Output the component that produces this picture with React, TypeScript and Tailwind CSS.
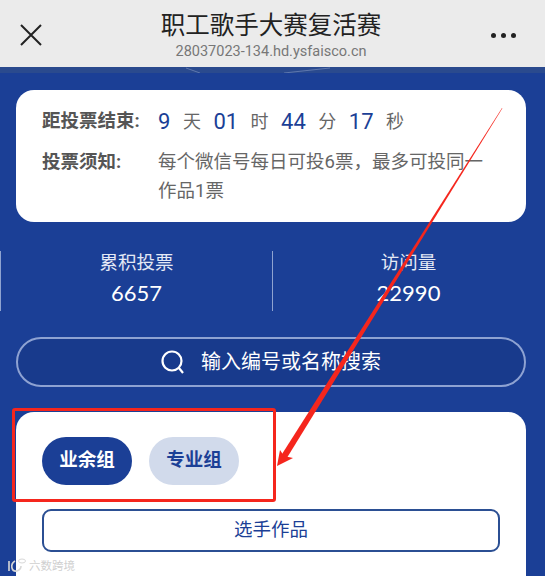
const FONT = "font-['Roboto','Noto_Sans_CJK_SC',sans-serif]";

function Countdown({ value, unit }: { value: string; unit: string }) {
  return (
    <>
      <span className="text-[22px] leading-[30px] text-[#1b3f96]">{value}</span>
      <span className="text-[18px] leading-[30px] text-[#666] mx-[12.5px]">{unit}</span>
    </>
  );
}

function Stat({ label, value }: { label: string; value: string }) {
  return (
    <div className="w-[271px] flex flex-col items-center text-white">
      <div className="text-[18.5px] leading-[24px] text-[#e4e9f5]">{label}</div>
      <div className="text-[22px] leading-[30px] mt-[3px] font-['Lato','Noto_Sans_CJK_SC',sans-serif]">{value}</div>
    </div>
  );
}

export default function App() {
  return (
    <div className={`relative w-[545px] h-[576px] overflow-hidden bg-[#1b3f96] ${FONT}`}>
      {/* title bar */}
      <div className="h-[67px] bg-[#ebebeb] flex items-center">
        <div className="w-[70px] pl-[19px] pt-[2px]">
          <svg width="24" height="24" viewBox="0 0 24 24" className="block">
            <path d="M2 2 L22 22 M22 2 L2 22" stroke="#222" strokeWidth="2" fill="none" />
          </svg>
        </div>
        <div className="flex-1 flex flex-col items-center pt-[3px]">
          <div className="text-[24.5px] leading-[34px] text-[#222]">职工歌手大赛复活赛</div>
          <div className="text-[14.5px] leading-[18px] text-[#777]">28037023-134.hd.ysfaisco.cn</div>
        </div>
        <div className="w-[73px] pr-[29px] pt-[4px] flex justify-end gap-[5px]">
          <span className="w-[5px] h-[5px] rounded-full bg-[#222]" />
          <span className="w-[5px] h-[5px] rounded-full bg-[#222]" />
          <span className="w-[5px] h-[5px] rounded-full bg-[#222]" />
        </div>
      </div>
      {/* bottom edge of the hero picture */}
      <svg className="block" width="545" height="6" viewBox="0 0 545 6">
        <rect width="545" height="6" fill="#2a4a8e" />
        <path d="M186 1 L200 6 M284 6 L330 1" stroke="#5f78ad" strokeWidth="1" fill="none" />
      </svg>

      <div className="pl-[16px] pr-[19px] pt-[17px]">
        {/* countdown + notice */}
        <div className="bg-white rounded-[18px] h-[132px] pl-[26px] pt-[17px]">
          <div className="flex items-center h-[30px]">
            <span className="w-[116px] text-[18.5px] font-bold text-[#555]">距投票结束:</span>
            <Countdown value="9" unit="天" />
            <Countdown value="01" unit="时" />
            <Countdown value="44" unit="分" />
            <Countdown value="17" unit="秒" />
          </div>
          <div className="flex mt-[11px]">
            <span className="w-[116px] shrink-0 text-[18.5px] leading-[29px] font-bold text-[#555]">投票须知:</span>
            <p className="w-[330px] text-[18.5px] leading-[29px] text-[#666]">每个微信号每日可投6票，最多可投同一作品1票</p>
          </div>
        </div>
      </div>

      {/* stats */}
      <div className="flex mt-[29px] h-[60px]">
        <div className="w-[1px] bg-[#8fa3d0]" />
        <Stat label="累积投票" value="6657" />
        <div className="w-[1px] bg-[#8fa3d0]" />
        <Stat label="访问量" value="22990" />
      </div>

      {/* search */}
      <div className="pl-[16px] pr-[19px] mt-[26px]">
        <div className="h-[50px] rounded-full border-2 border-[#8ea2d2] bg-[#183a8c] flex items-center justify-center gap-[16px] text-white">
          <svg width="24" height="24" viewBox="0 0 24 24" fill="none" stroke="white" strokeWidth="2.2">
            <circle cx="11" cy="11" r="9.5" />
            <path d="M18 18 L22 23" />
          </svg>
          <span className="text-[20px]">输入编号或名称搜索</span>
        </div>
      </div>

      {/* groups card */}
      <div className="pl-[16px] pr-[19px] mt-[25px]">
        <div className="bg-white rounded-t-[18px] h-[170px] pl-[26px] pt-[25px]">
          <div className="flex gap-[17px]">
            <button className="w-[90px] h-[48px] rounded-full bg-[#1b3f96] text-white text-[18.5px] font-bold">业余组</button>
            <button className="w-[90px] h-[48px] rounded-full bg-[#d1daeb] text-[#1b3f96] text-[18.5px] font-bold">专业组</button>
          </div>
          <button className="block w-[458px] h-[43px] mt-[24px] rounded-[9px] border-2 border-[#2b4f93] bg-white text-[#1b3f96] text-[18.5px]">选手作品</button>
        </div>
      </div>

      {/* annotation: red box and arrow */}
      <div className="absolute left-[12px] top-[408px] w-[264px] h-[94px] border-[3px] border-[#f5261d] rounded-[3px]" />
      <svg className="absolute left-0 top-0" width="545" height="576" viewBox="0 0 545 576">
        <path d="M502 108 L502.4 108.2 L285 461 L279.5 458 Z" fill="#f5261d" />
        <path d="M277 466 L280 450 L284 456 L293 458 Z" fill="#f5261d" />
      </svg>

      {/* watermark */}
      <div className="absolute left-[7px] top-[558px] flex items-center gap-[2px] text-[#d0d0d0]">
        <svg width="20" height="16" viewBox="0 0 20 16" fill="none" stroke="#d8d8d8" strokeWidth="1.6">
          <path d="M2 3 V13 M8 3 C3 6 4 14 10 13 C13 12 14 10 14 8" />
          <ellipse cx="15" cy="3" rx="3.5" ry="2" strokeWidth="1" />
        </svg>
        <span className="text-[11.5px] leading-[14px]">六数跨境</span>
      </div>
    </div>
  );
}
